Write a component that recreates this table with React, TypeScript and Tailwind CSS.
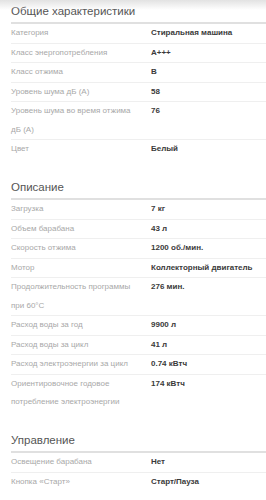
import React from "react";

type Row = { label: React.ReactNode; value: string; last?: boolean };

const sections: { title: string; rows: Row[] }[] = [
  {
    title: "Общие характеристики",
    rows: [
      { label: "Категория", value: "Стиральная машина" },
      { label: "Класс энергопотребления", value: "A+++" },
      { label: "Класс отжима", value: "B" },
      { label: "Уровень шума дБ (А)", value: "58" },
      {
        label: (
          <>
            Уровень шума во время отжима
            <br />
            дБ (А)
          </>
        ),
        value: "76",
      },
      { label: "Цвет", value: "Белый" },
    ],
  },
  {
    title: "Описание",
    rows: [
      { label: "Загрузка", value: "7 кг" },
      { label: "Объем барабана", value: "43 л" },
      { label: "Скорость отжима", value: "1200 об./мин." },
      { label: "Мотор", value: "Коллекторный двигатель" },
      {
        label: (
          <>
            Продолжительность программы
            <br />
            при 60°C
          </>
        ),
        value: "276 мин.",
      },
      { label: "Расход воды за год", value: "9900 л" },
      { label: "Расход воды за цикл", value: "41 л" },
      { label: "Расход электроэнергии за цикл", value: "0.74 кВтч" },
      {
        label: (
          <>
            Ориентировочное годовое
            <br />
            потребление электроэнергии
          </>
        ),
        value: "174 кВтч",
      },
    ],
  },
  {
    title: "Управление",
    rows: [
      { label: "Освещение барабана", value: "Нет" },
      { label: "Кнопка «Старт»", value: "Старт/Пауза" },
    ],
  },
];

export default function App() {
  return (
    <div className="relative w-[266px] h-[500px] overflow-hidden bg-white font-['Liberation_Sans',Arial,sans-serif]">
      <div className="pointer-events-none absolute inset-x-0 top-0 h-[10px] bg-gradient-to-b from-[#e2e2e2] to-white/0" />
      <div className="pl-[11px]">
        {sections.map((s, si) => (
          <div key={si} className={si === 0 ? "" : "mt-[17.5px]"}>
            <div className="pt-[4px] pb-[4px] leading-[14px] text-[11.5px] text-[#555] border-b-2 border-[#e0e0e0]">
              {s.title}
            </div>
            {s.rows.map((r, ri) => (
              <div
                key={ri}
                className={
                  "grid grid-cols-[140px_1fr] text-[8px] leading-[18.5px] " +
                  (ri === s.rows.length - 1 ? "" : "border-b border-[#efefef]")
                }
              >
                <div className="text-[#a8a8a8] whitespace-nowrap">{r.label}</div>
                <div className="font-bold text-[#3a3a3a] whitespace-nowrap">{r.value}</div>
              </div>
            ))}
          </div>
        ))}
      </div>
    </div>
  );
}
